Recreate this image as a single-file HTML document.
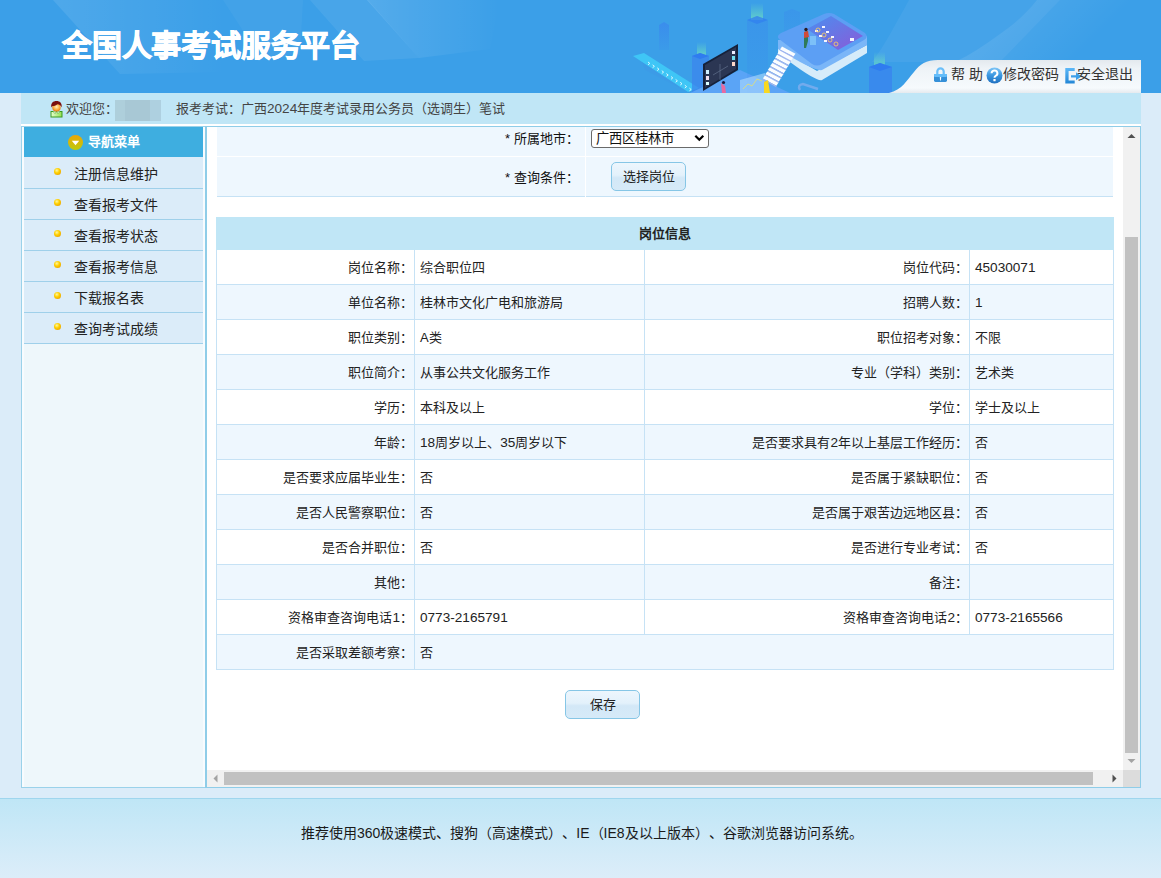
<!DOCTYPE html>
<html lang="zh-CN">
<head>
<meta charset="utf-8">
<style>
*{margin:0;padding:0;box-sizing:border-box}
html,body{width:1161px;height:878px;overflow:hidden}
body{position:relative;text-spacing-trim:space-all;background:#dbecf9;font-family:"Liberation Sans",sans-serif;font-size:13px;color:#333}
.a{position:absolute}
.t{position:absolute;white-space:nowrap;line-height:16px}
#hdr{left:0;top:0;width:1161px;height:93px;background:#3b9fe8;overflow:hidden}
#title{left:62px;top:26px;font-size:30px;line-height:40px;font-weight:900;color:#fff;-webkit-text-stroke:0.8px #fff;letter-spacing:-0.2px;white-space:nowrap}
#wel{left:21px;top:93px;width:1120px;height:31px;background:#c0e6f6}
#wstrip{left:21px;top:124px;width:1120px;height:2px;background:#fff}
#side{left:21px;top:126px;width:186px;height:662px;background:#eef7fb;border:1px solid #9ad2ea;border-right:none}
#frame{left:205px;top:126px;width:936px;height:662px;border-style:solid;border-color:#8fcde8;border-width:1px 1px 1px 2px;background:#fff;overflow:hidden}
#foot{left:0;top:798px;width:1161px;height:80px;border-top:1px solid #9fd6ee;background:linear-gradient(#bfe6f6,#dcedf9)}
/* sidebar */
.navh{left:24px;top:127px;width:179px;height:30px;background:#3eaee0}
.mi{left:24px;width:179px;height:31px;background:#dbecf9;border-bottom:1px solid #9fd0ea}
.mi .b{position:absolute;left:30px;top:10px;width:7px;height:7px;border-radius:50%;background:radial-gradient(circle at 40% 35%,#fff8a0 0,#ffd000 40%,#e09000 100%)}
.mi .t{left:50px;top:8px;font-size:14px;color:#222}
/* content */
.frow{left:217px;width:896px;background:#eef7fe}
.tbl{position:absolute;left:216px;top:217px;width:898px}
.r{position:absolute;left:0;width:898px;height:35px;border-left:1px solid #c6e2f5;border-right:1px solid #c6e2f5;border-bottom:1px solid #c6e2f5}
.r.e{background:#eef7fe}
.r.o{background:#fff}
.c{position:absolute;top:1px;height:33px;line-height:34px;white-space:nowrap;color:#222}
.c.l{text-align:right;padding-right:1px}
.c.v{padding-left:5px}
.dv{position:absolute;top:0;width:1px;height:34px;background:#c6e2f5}
.btn{border:1px solid #86c6e6;border-radius:5px;background:linear-gradient(#edf6fd 0,#e3f1fb 45%,#d3e8f7 55%,#d6eaf8 100%);text-align:center;color:#222}
.d{font-size:13.6px}
</style>
</head>
<body>
<div id="hdr" class="a">
  
<svg class="a" style="left:0;top:0" width="1161" height="93" viewBox="0 0 1161 93">
  <defs>
    <linearGradient id="st1" x1="0" y1="0" x2="1" y2="0"><stop offset="0" stop-color="#fff" stop-opacity="0.10"/><stop offset="1" stop-color="#fff" stop-opacity="0.0"/></linearGradient>
    <linearGradient id="st2" x1="0" y1="0" x2="1" y2="0"><stop offset="0" stop-color="#fff" stop-opacity="0.13"/><stop offset="1" stop-color="#fff" stop-opacity="0"/></linearGradient>
    <linearGradient id="pil" x1="0" y1="0" x2="0" y2="1"><stop offset="0" stop-color="#3a86ee"/><stop offset="1" stop-color="#3a86ee" stop-opacity="0.2"/></linearGradient>
    <linearGradient id="glow" x1="0" y1="0" x2="0" y2="1"><stop offset="0" stop-color="#6fe0c0" stop-opacity="0"/><stop offset="1" stop-color="#6fe0c0" stop-opacity="0.75"/></linearGradient>
    <linearGradient id="scr" x1="0" y1="0" x2="1" y2="1"><stop offset="0" stop-color="#4a8ff0"/><stop offset="1" stop-color="#8a5ad8"/></linearGradient>
    <linearGradient id="arc" x1="0" y1="0" x2="1" y2="0.3"><stop offset="0.1" stop-color="#fff" stop-opacity="0.12"/><stop offset="0.8" stop-color="#fff" stop-opacity="0"/></linearGradient>
  </defs>
  <!-- subtle stripes -->
  <path d="M53 0 L225 0 L225 72 L120 74 Z" fill="url(#st1)"/>
  <path d="M223 0 L303 0 L300 55 L262 60 Z" fill="#fff" fill-opacity="0.04"/>
  <path d="M310 0 L368 0 L419 58 L364 61 Z" fill="#fff" fill-opacity="0.07"/>
  <path d="M367 0 L500 0 L490 49 L419 58 Z" fill="url(#st2)"/>
  <path d="M909 0 C895 25 885 45 872 62 L1000 62 L1060 0 Z" fill="#fff" fill-opacity="0.05"/>
  <path d="M1037 0 C1025 15 1012 26 1000 34 C985 45 970 55 955 62 L1161 62 L1161 0 Z" fill="url(#arc)"/>
  
  <!-- far pillars -->
  <path d="M659 25 L664 22 L669 25 L669 50 L659 50 Z" fill="url(#pil)" opacity="0.7"/>
  <path d="M784 12 L792 9 L800 12 L800 45 L784 45 Z" fill="url(#pil)" opacity="0.35"/>
  <!-- belt -->
  <path d="M642 62 L700 93 L690 93 L645 70 Z" fill="#3e9ae6" opacity="0.6"/>
  <path d="M633 56 L644 53 L699 88 L688 92 Z" fill="#3fc6f6"/>
  <path d="M648.0 62.0 l1.8 1.4 l-1.8 1.4 M652.6 64.9 l1.8 1.4 l-1.8 1.4 M657.2 67.8 l1.8 1.4 l-1.8 1.4 M661.8 70.7 l1.8 1.4 l-1.8 1.4 M666.4 73.6 l1.8 1.4 l-1.8 1.4 M671.0 76.5 l1.8 1.4 l-1.8 1.4 M675.6 79.4 l1.8 1.4 l-1.8 1.4 M680.2 82.3 l1.8 1.4 l-1.8 1.4 M684.8 85.2 l1.8 1.4 l-1.8 1.4 M689.4 88.1 l1.8 1.4 l-1.8 1.4" stroke="#e8fbff" stroke-width="0.9" fill="none"/>
  <!-- pillar with glow 1 -->
  <rect x="697" y="42" width="9" height="14" fill="url(#glow)"/>
  <path d="M692 56 L700 53 L709 56 L709 93 L692 93 Z" fill="#3c86ee" opacity="0.75"/>
  <path d="M692 56 L700 53 L709 56 L700 59 Z" fill="#2f7cf0"/>
  <!-- platform under board -->
  <path d="M690 93 L740 70 L790 93 Z" fill="#5aa4f6"/>
  <!-- board -->
  <path d="M703 64 L738 44 L738 70 L703 91 Z" fill="#16213a"/>
  <path d="M705 65 L736 47 L736 69 L705 88 Z" fill="#2b3653"/>
  <rect x="706" y="70" width="3" height="4" fill="#cfefff"/><rect x="706" y="76" width="3" height="4" fill="#f0e0f0"/><rect x="706" y="82" width="3" height="3" fill="#dff"/>
  <rect x="732" y="51" width="3" height="3" fill="#eef"/><rect x="732" y="56" width="3" height="4" fill="#6ee0f0"/><rect x="732" y="62" width="3" height="4" fill="#ffd8c8"/>
  <path d="M713 75 L728 66 M720 64 L720 80" stroke="#6a7a96" stroke-width="0.6"/>
  <!-- person 1 -->
  <path d="M721 83 L725 86 L726 93 L722 93 Z" fill="#e86aa0"/><circle cx="723.5" cy="82.5" r="1.6" fill="#1a1a40"/>
  <!-- pillar 2 -->
  <rect x="751" y="3" width="12" height="17" fill="url(#glow)"/>
  <path d="M747 20 L757 16 L768 20 L768 93 L747 93 Z" fill="url(#pil)" opacity="0.4"/>
  <path d="M747 20 L757 16 L768 20 L757 24 Z" fill="#2f7cf0" opacity="0.6"/>
  <!-- chart panel -->
  <path d="M740 93 L740 80 L765 73 L765 93 Z" fill="#b8e0ff" opacity="0.55"/>
  <path d="M743 89 L748 84 L752 86 L757 79 L762 81" stroke="#e6e070" stroke-width="0.8" fill="none"/>
  <!-- platform -->
  <path d="M790 62 Q817 82 822 80 L867 53 L867 45 L817 71 L778 48 L778 54 Z" fill="#d6ecfa"/>
  <path d="M778 40 L778 49 Q815 72 822 70 L867 45 L867 36 Z" fill="#7ab6f8"/>
  <path d="M779 39 Q776 36 781 33 L824 14 Q829 12 834 14 L865 33 Q869 37 864 40 L822 64 Q817 67 812 64 Z" fill="#5c9ff4"/>
  <!-- screen -->
  <path d="M807 29 L831 16 L863 36 L838 50 Z" fill="url(#scr)"/>
  <path d="M815 30 h3 v2 h-3z M822 26 h3 v2 h-3z M819 35 h3 v2 h-3z M826 31 h3 v2 h-3z M824 40 h3 v2 h-3z M831 36 h3 v2 h-3z M850 38 h4 v3 h-4z" fill="#f5f5ff"/>
  <circle cx="818" cy="30" r="2" fill="none" stroke="#ffd060" stroke-width="0.8"/><circle cx="824" cy="35" r="2" fill="none" stroke="#ffd060" stroke-width="0.8"/><circle cx="830" cy="40" r="2" fill="none" stroke="#ffd060" stroke-width="0.8"/><circle cx="836" cy="44" r="2" fill="none" stroke="#ffd060" stroke-width="0.8"/>
  <!-- person 2 -->
  <rect x="810" y="36" width="6" height="9" fill="#7cc0f8"/>
  <path d="M804 32 L808 31 L808 41 L806 48 L804 48 Z" fill="#2f7a5a"/><path d="M804 32 L808 31 L809 37 L804 38 Z" fill="#d04a3a"/><circle cx="806" cy="29.5" r="1.7" fill="#2a1a20"/>
  <!-- stairs -->
  <path d="M782.0 46.5 l13.5 7.2 l-2 2.9 l-13.5 -7.2 Z" fill="#fbfdff"/>
  <path d="M780.0 49.4 l13.5 7.2 l0 1.6 l-13.5 -7.2 Z" fill="#a4b4ee"/>
  <path d="M779.5 50.6 l13.5 7.2 l-2 2.9 l-13.5 -7.2 Z" fill="#fbfdff"/>
  <path d="M777.5 53.5 l13.5 7.2 l0 1.6 l-13.5 -7.2 Z" fill="#a4b4ee"/>
  <path d="M777.1 54.8 l13.5 7.2 l-2 2.9 l-13.5 -7.2 Z" fill="#fbfdff"/>
  <path d="M775.1 57.7 l13.5 7.2 l0 1.6 l-13.5 -7.2 Z" fill="#a4b4ee"/>
  <path d="M774.6 59.0 l13.5 7.2 l-2 2.9 l-13.5 -7.2 Z" fill="#fbfdff"/>
  <path d="M772.6 61.9 l13.5 7.2 l0 1.6 l-13.5 -7.2 Z" fill="#a4b4ee"/>
  <path d="M772.2 63.1 l13.5 7.2 l-2 2.9 l-13.5 -7.2 Z" fill="#fbfdff"/>
  <path d="M770.2 66.0 l13.5 7.2 l0 1.6 l-13.5 -7.2 Z" fill="#a4b4ee"/>
  <path d="M769.8 67.2 l13.5 7.2 l-2 2.9 l-13.5 -7.2 Z" fill="#fbfdff"/>
  <path d="M767.8 70.2 l13.5 7.2 l0 1.6 l-13.5 -7.2 Z" fill="#a4b4ee"/>
  <path d="M767.3 71.4 l13.5 7.2 l-2 2.9 l-13.5 -7.2 Z" fill="#fbfdff"/>
  <path d="M765.3 74.3 l13.5 7.2 l0 1.6 l-13.5 -7.2 Z" fill="#a4b4ee"/>
  <path d="M764.9 75.6 l13.5 7.2 l-2 2.9 l-13.5 -7.2 Z" fill="#fbfdff"/>
  <path d="M762.9 78.5 l13.5 7.2 l0 1.6 l-13.5 -7.2 Z" fill="#a4b4ee"/>
  <!-- yellow figure -->
  <path d="M764 82 L768 80 L770 93 L764 93 Z" fill="#f8d820"/>
  <!-- chain -->
  <path d="M800 90 Q797 85 803 84 L818 89" stroke="#8ab0f0" stroke-width="2.5" fill="none" opacity="0.7"/>
  <!-- right pillar -->
  <rect x="874" y="52" width="11" height="15" fill="url(#glow)"/>
  <path d="M869 67 L880 63 L892 67 L892 93 L869 93 Z" fill="#3a84ee" opacity="0.8"/>
  <path d="M869 67 L880 63 L892 67 L880 71 Z" fill="#2f7cf0"/>
</svg>
<div id="title" class="a">全国人事考试服务平台</div>
</div>

<svg class="a" style="left:880px;top:58px" width="281" height="35" viewBox="880 58 281 35">
  <defs>
    <linearGradient id="tg" x1="0" y1="0" x2="0" y2="1">
      <stop offset="0" stop-color="#e3e9ee"/><stop offset="0.25" stop-color="#eef3f7"/><stop offset="0.85" stop-color="#f6fafd"/><stop offset="1" stop-color="#e6eaee"/>
    </linearGradient>
  </defs>
  <path d="M889 93 C902 90 907 80 914 72 C920 64 926 60 938 60 L1141 60 L1141 93 Z" fill="url(#tg)"/>
</svg>
<svg class="a" style="left:933px;top:67px" width="15" height="16" viewBox="0 0 15 16">
  <path d="M4.3 7.5 V4.6 A3.2 3.2 0 0 1 10.7 4.6 V7.5" fill="none" stroke="#6cbff9" stroke-width="2.2"/>
  <rect x="1" y="7" width="13" height="8" rx="1.4" fill="#3590d8"/>
  <rect x="1" y="7" width="13" height="3" rx="1" fill="#64bdfa"/>
  <path d="M6.8 10 H8.2 L7.9 13.5 H7.1 Z" fill="#fff"/>
</svg>
<div class="t" style="left:951px;top:66px;font-size:14px;color:#333">帮 助</div>
<svg class="a" style="left:986px;top:67px" width="17" height="17" viewBox="0 0 17 17">
  <defs><linearGradient id="qg" x1="0" y1="0" x2="0" y2="1"><stop offset="0" stop-color="#7ec6f7"/><stop offset="0.5" stop-color="#3a96e0"/><stop offset="1" stop-color="#1f70c0"/></linearGradient></defs>
  <circle cx="8.5" cy="8.5" r="8" fill="url(#qg)"/>
  <path d="M5.6 6.3 A2.9 2.8 0 1 1 9.6 8.9 C8.7 9.4 8.5 9.8 8.5 10.8" fill="none" stroke="#fff" stroke-width="2"/>
  <rect x="7.4" y="12" width="2.2" height="2.2" fill="#fff"/>
</svg>
<div class="t" style="left:1003px;top:66px;font-size:14px;color:#333">修改密码</div>
<svg class="a" style="left:1065px;top:68px" width="18" height="16" viewBox="0 0 18 16">
  <defs><linearGradient id="eg" x1="0" y1="0" x2="0" y2="1"><stop offset="0" stop-color="#5cb8f8"/><stop offset="1" stop-color="#2286d6"/></linearGradient></defs>
  <path d="M0.3 0 H9.7 V3 H3.6 V12.5 H9.7 V15.6 H0.3 Z" fill="url(#eg)"/>
  <path d="M6 7.3 H11 V4.3 L16.5 8.5 L11 12.2 V9.6 H6 Z" fill="#3da0ea"/>
</svg>
<div class="t" style="left:1077px;top:66px;font-size:14px;color:#333">安全退出</div>
<div id="wel" class="a"></div>
<div class="t" style="left:66px;top:101px;color:#444">欢迎您：</div>
<div class="a" style="left:115px;top:100px;width:46px;height:21px;background:linear-gradient(90deg,#aecfdb 0,#aecfdb 10px,#a8c8d5 10px,#a8c8d5 35px,#aed0e0 35px)"></div>
<svg class="a" style="left:50px;top:100px" width="13" height="18" viewBox="0 0 13 18">
  <defs><radialGradient id="fc" cx="0.5" cy="0.4" r="0.6"><stop offset="0" stop-color="#fff0c0"/><stop offset="0.6" stop-color="#ffb040"/><stop offset="1" stop-color="#e07010"/></radialGradient>
  <linearGradient id="sh" x1="0" y1="0" x2="1" y2="0"><stop offset="0" stop-color="#e8ffd0"/><stop offset="1" stop-color="#90e050"/></linearGradient></defs>
  <rect x="1" y="11.5" width="11" height="5.5" fill="url(#sh)" stroke="#3a9a20" stroke-width="1"/>
  <path d="M3 11.5 L5 13.5 L6.5 11.5 L8 13.5 L10 11.5" fill="#fff" stroke="#3a9a20" stroke-width="0.6"/>
  <ellipse cx="6.5" cy="7.6" rx="4.2" ry="4" fill="url(#fc)"/>
  <path d="M1.2 7.5 C0.8 3 3 1 6.5 1 C10 1 12 3 11.8 7.5 C11 5.5 9.5 4.5 7.5 4.2 C6 5.5 4 6 2 6.2 Z" fill="#7a1010"/>
</svg>
<div class="t" style="left:176px;top:101px;color:#444">报考考试：广西<span class="d">2024</span>年度考试录用公务员（选调生）笔试</div>
<div id="wstrip" class="a"></div>

<div id="side" class="a"></div>
<div class="a" style="left:22px;top:127px;width:2px;height:660px;background:#f7fbfe"></div>
<div class="a" style="left:203px;top:127px;width:2px;height:660px;background:#f7fbfe"></div>
<div class="a navh"></div>
<div class="a" style="left:24px;top:157px;width:179px;height:1px;background:#dbecf9"></div>
<div class="a" style="left:68px;top:135px;width:15px;height:15px;border-radius:50%;background:linear-gradient(#eca606,#bccb0e)"></div>
<svg class="a" style="left:71px;top:140px" width="9" height="6" viewBox="0 0 9 6"><path d="M0.8 0.8 H8.2 L4.5 5.2 Z" fill="#fff"/></svg>
<div class="t" style="left:88px;top:134px;color:#fff;font-weight:bold">导航菜单</div>
<div class="a mi" style="top:158px"><span class="b"></span><span class="t">注册信息维护</span></div>
<div class="a mi" style="top:189px"><span class="b"></span><span class="t">查看报考文件</span></div>
<div class="a mi" style="top:220px"><span class="b"></span><span class="t">查看报考状态</span></div>
<div class="a mi" style="top:251px"><span class="b"></span><span class="t">查看报考信息</span></div>
<div class="a mi" style="top:282px"><span class="b"></span><span class="t">下载报名表</span></div>
<div class="a mi" style="top:313px"><span class="b"></span><span class="t">查询考试成绩</span></div>

<div id="frame" class="a"></div>
<!-- form rows -->
<div class="a frow" style="top:127px;height:29px"></div>
<div class="a frow" style="top:157px;height:40px;border-bottom:1px solid #c6e2f5"></div>
<div class="a" style="left:585px;top:127px;width:1px;height:70px;background:#fff"></div>
<div class="t" style="left:505px;top:131px;color:#111">*&nbsp;所属地市：</div>
<div class="t" style="left:505px;top:170px;color:#111">*&nbsp;查询条件：</div>
<div class="a" style="left:591px;top:129px;width:118px;height:19px;border:1px solid #6a6a6a;border-radius:3px;background:#fff"></div>
<div class="t" style="left:596px;top:131px;color:#111;font-size:13.3px">广西区桂林市</div>
<svg class="a" style="left:694px;top:134px" width="11" height="9" viewBox="0 0 11 9"><path d="M1.3 1.8 L5.3 5.8 L9.3 1.8" fill="none" stroke="#000" stroke-width="2.2"/></svg>
<div class="a btn" style="left:611px;top:162px;width:75px;height:29px;line-height:27px">选择岗位</div>

<!-- table -->
<div class="tbl">
  <div class="a" style="left:0;top:0;width:898px;height:33px;background:#c0e6f6;text-align:center;line-height:33px;font-weight:bold;color:#222">岗位信息</div>
  <div class="r o" style="top:33px">
<div class="c l" style="left:0;width:197px">岗位名称：</div><div class="dv" style="left:197px"></div>
<div class="c v" style="left:198px">综合职位四</div>
<div class="dv" style="left:427px"></div><div class="c l" style="left:428px;width:324px">岗位代码：</div><div class="dv" style="left:752px"></div>
<div class="c v" style="left:753px"><span class="d">45030071</span></div>
</div>
<div class="r e" style="top:68px">
<div class="c l" style="left:0;width:197px">单位名称：</div><div class="dv" style="left:197px"></div>
<div class="c v" style="left:198px">桂林市文化广电和旅游局</div>
<div class="dv" style="left:427px"></div><div class="c l" style="left:428px;width:324px">招聘人数：</div><div class="dv" style="left:752px"></div>
<div class="c v" style="left:753px"><span class="d">1</span></div>
</div>
<div class="r o" style="top:103px">
<div class="c l" style="left:0;width:197px">职位类别：</div><div class="dv" style="left:197px"></div>
<div class="c v" style="left:198px">A类</div>
<div class="dv" style="left:427px"></div><div class="c l" style="left:428px;width:324px">职位招考对象：</div><div class="dv" style="left:752px"></div>
<div class="c v" style="left:753px">不限</div>
</div>
<div class="r e" style="top:138px">
<div class="c l" style="left:0;width:197px">职位简介：</div><div class="dv" style="left:197px"></div>
<div class="c v" style="left:198px">从事公共文化服务工作</div>
<div class="dv" style="left:427px"></div><div class="c l" style="left:428px;width:324px">专业（学科）类别：</div><div class="dv" style="left:752px"></div>
<div class="c v" style="left:753px">艺术类</div>
</div>
<div class="r o" style="top:173px">
<div class="c l" style="left:0;width:197px">学历：</div><div class="dv" style="left:197px"></div>
<div class="c v" style="left:198px">本科及以上</div>
<div class="dv" style="left:427px"></div><div class="c l" style="left:428px;width:324px">学位：</div><div class="dv" style="left:752px"></div>
<div class="c v" style="left:753px">学士及以上</div>
</div>
<div class="r e" style="top:208px">
<div class="c l" style="left:0;width:197px">年龄：</div><div class="dv" style="left:197px"></div>
<div class="c v" style="left:198px"><span class="d">18</span>周岁以上、<span class="d">35</span>周岁以下</div>
<div class="dv" style="left:427px"></div><div class="c l" style="left:428px;width:324px">是否要求具有<span class="d">2</span>年以上基层工作经历：</div><div class="dv" style="left:752px"></div>
<div class="c v" style="left:753px">否</div>
</div>
<div class="r o" style="top:243px">
<div class="c l" style="left:0;width:197px">是否要求应届毕业生：</div><div class="dv" style="left:197px"></div>
<div class="c v" style="left:198px">否</div>
<div class="dv" style="left:427px"></div><div class="c l" style="left:428px;width:324px">是否属于紧缺职位：</div><div class="dv" style="left:752px"></div>
<div class="c v" style="left:753px">否</div>
</div>
<div class="r e" style="top:278px">
<div class="c l" style="left:0;width:197px">是否人民警察职位：</div><div class="dv" style="left:197px"></div>
<div class="c v" style="left:198px">否</div>
<div class="dv" style="left:427px"></div><div class="c l" style="left:428px;width:324px">是否属于艰苦边远地区县：</div><div class="dv" style="left:752px"></div>
<div class="c v" style="left:753px">否</div>
</div>
<div class="r o" style="top:313px">
<div class="c l" style="left:0;width:197px">是否合并职位：</div><div class="dv" style="left:197px"></div>
<div class="c v" style="left:198px">否</div>
<div class="dv" style="left:427px"></div><div class="c l" style="left:428px;width:324px">是否进行专业考试：</div><div class="dv" style="left:752px"></div>
<div class="c v" style="left:753px">否</div>
</div>
<div class="r e" style="top:348px">
<div class="c l" style="left:0;width:197px">其他：</div><div class="dv" style="left:197px"></div>
<div class="c v" style="left:198px"></div>
<div class="dv" style="left:427px"></div><div class="c l" style="left:428px;width:324px">备注：</div><div class="dv" style="left:752px"></div>
<div class="c v" style="left:753px"></div>
</div>
<div class="r o" style="top:383px">
<div class="c l" style="left:0;width:197px">资格审查咨询电话<span class="d">1</span>：</div><div class="dv" style="left:197px"></div>
<div class="c v" style="left:198px"><span class="d">0773-2165791</span></div>
<div class="dv" style="left:427px"></div><div class="c l" style="left:428px;width:324px">资格审查咨询电话<span class="d">2</span>：</div><div class="dv" style="left:752px"></div>
<div class="c v" style="left:753px"><span class="d">0773-2165566</span></div>
</div>
<div class="r e" style="top:418px">
<div class="c l" style="left:0;width:197px">是否采取差额考察：</div><div class="dv" style="left:197px"></div>
<div class="c v" style="left:198px">否</div>
</div>

</div>
<div class="a btn" style="left:565px;top:690px;width:75px;height:29px;line-height:27px">保存</div>


<!-- scrollbars -->
<div class="a" style="left:1123px;top:127px;width:17px;height:643px;background:#f1f1f1"></div>
<div class="a" style="left:1125px;top:237px;width:13px;height:516px;background:#c1c1c1"></div>
<svg class="a" style="left:1123px;top:127px" width="17" height="17" viewBox="0 0 17 17"><path d="M4.5 11 L8.5 7 L12.5 11 Z" fill="#505050"/></svg>
<svg class="a" style="left:1123px;top:753px" width="17" height="17" viewBox="0 0 17 17"><path d="M4.5 6 L8.5 10 L12.5 6 Z" fill="#a3a3a3"/></svg>
<div class="a" style="left:207px;top:770px;width:916px;height:17px;background:#f1f1f1"></div>
<div class="a" style="left:224px;top:772px;width:869px;height:13px;background:#c1c1c1"></div>
<svg class="a" style="left:207px;top:770px" width="17" height="17" viewBox="0 0 17 17"><path d="M10.5 4.5 L6.5 8.5 L10.5 12.5 Z" fill="#a3a3a3"/></svg>
<svg class="a" style="left:1106px;top:770px" width="17" height="17" viewBox="0 0 17 17"><path d="M6.5 4.5 L10.5 8.5 L6.5 12.5 Z" fill="#505050"/></svg>
<div class="a" style="left:1123px;top:770px;width:17px;height:17px;background:#dcdcdc"></div>
<div id="foot" class="a"></div>
<div class="t" style="left:301px;top:825px;color:#1a1a1a;font-size:14px">推荐使用360极速模式、搜狗（高速模式）、IE（IE8及以上版本）、谷歌浏览器访问系统。</div>
</body>
</html>
